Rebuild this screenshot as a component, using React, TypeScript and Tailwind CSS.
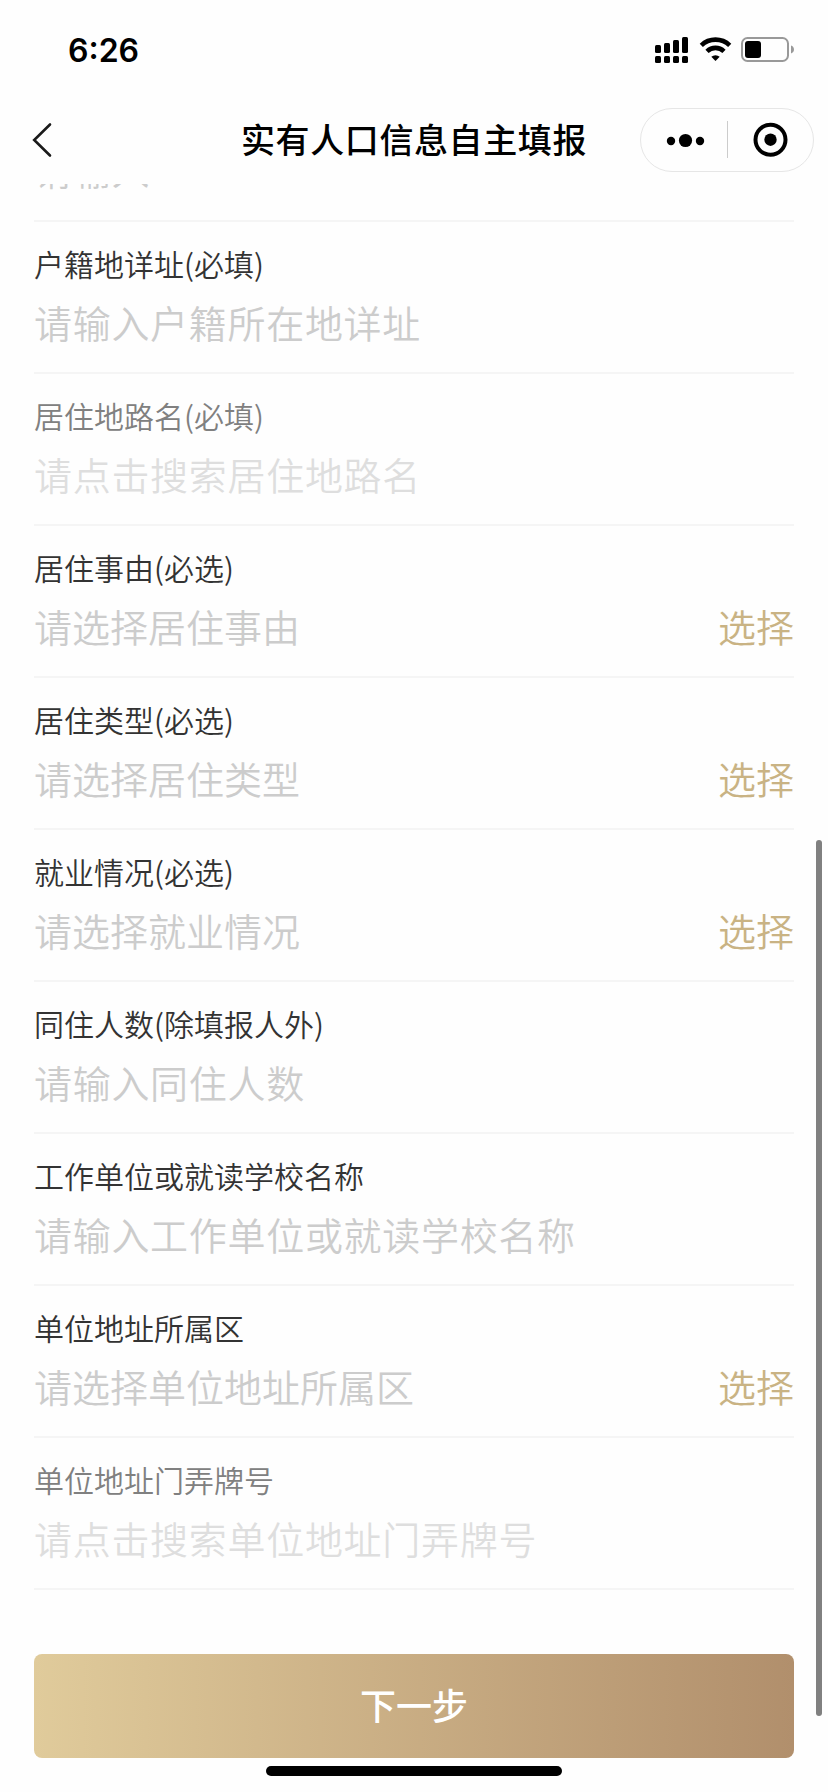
type Field = {
  label: string;
  placeholder: string;
  kind: "input" | "select" | "disabled";
};

const fields: Field[] = [
  { label: "户籍地详址(必填)", placeholder: "请输入户籍所在地详址", kind: "input" },
  { label: "居住地路名(必填)", placeholder: "请点击搜索居住地路名", kind: "disabled" },
  { label: "居住事由(必选)", placeholder: "请选择居住事由", kind: "select" },
  { label: "居住类型(必选)", placeholder: "请选择居住类型", kind: "select" },
  { label: "就业情况(必选)", placeholder: "请选择就业情况", kind: "select" },
  { label: "同住人数(除填报人外)", placeholder: "请输入同住人数", kind: "input" },
  { label: "工作单位或就读学校名称", placeholder: "请输入工作单位或就读学校名称", kind: "input" },
  { label: "单位地址所属区", placeholder: "请选择单位地址所属区", kind: "select" },
  { label: "单位地址门弄牌号", placeholder: "请点击搜索单位地址门弄牌号", kind: "disabled" },
];

function StatusIcons() {
  return (
    <svg className="h-[28px] w-[140px]" viewBox="655 36 140 28">
      <rect x="655" y="45" width="6" height="8" rx="1.5" />
      <rect x="664" y="43" width="6" height="10" rx="1.5" />
      <rect x="673" y="40" width="6" height="13" rx="1.5" />
      <rect x="682" y="37" width="6" height="16" rx="1.5" />
      <rect x="655" y="56" width="6" height="7" rx="1.5" />
      <rect x="664" y="56" width="6" height="7" rx="1.5" />
      <rect x="673" y="56" width="6" height="7" rx="1.5" />
      <rect x="682" y="56" width="6" height="7" rx="1.5" />
      <path d="M701.3 45.3a20.5 20.5 0 0 1 28.4 0" fill="none" stroke="black" strokeWidth="4.6" />
      <path d="M707 51.3a12.3 12.3 0 0 1 17 0" fill="none" stroke="black" strokeWidth="4.6" />
      <path d="M711.3 56.7a6.4 6.4 0 0 1 8.4 0L715.5 61z" />
      <rect x="742" y="38" width="46" height="23" rx="5.5" fill="none" stroke="#999" strokeWidth="2" />
      <rect x="745" y="41" width="16" height="17" rx="3" />
      <path d="M791 45.5c1.8.6 3 2.2 3 4s-1.2 3.4-3 4z" fill="#999" />
    </svg>
  );
}

function Capsule() {
  return (
    <div className="flex h-16 w-[174px] items-center rounded-full border border-[#e6e6e6]">
      <svg className="h-[62px] w-[172px]" viewBox="641 109 172 62">
        <circle cx="671" cy="141" r="4.2" />
        <circle cx="685.5" cy="140.5" r="6.6" />
        <circle cx="700" cy="141" r="4.2" />
        <rect x="727" y="121" width="1" height="37" fill="#ccc" />
        <circle cx="770.5" cy="139.7" r="15" fill="none" stroke="black" strokeWidth="4" />
        <circle cx="770.5" cy="139.7" r="6.2" />
      </svg>
    </div>
  );
}

function FieldRow({ label, placeholder, kind }: Field) {
  return (
    <div className="h-[152px] border-b-2 border-[#f5f5f5] pt-[19px]">
      <div className={`h-11 text-[30px] leading-[44px] ${kind === "disabled" ? "text-[#808080]" : "text-[#333]"}`}>
        {label}
      </div>
      <div className="mt-[13px] flex h-12 items-center justify-between text-[38px] leading-[48px]">
        <span
          className={
            kind === "select"
              ? "text-[#ccc]"
              : kind === "input"
                ? "tracking-[0.7px] text-[#ccc]"
                : "tracking-[0.7px] text-[#dedede]"
          }
        >
          {placeholder}
        </span>
        {kind === "select" && <button className="text-[#c9b384]">选择</button>}
      </div>
    </div>
  );
}

export default function App() {
  return (
    <div className="relative flex h-[1792px] w-[828px] flex-col overflow-hidden bg-[#fefefe] font-['Noto_Sans_CJK_SC',sans-serif] font-[350] text-black">
      <header className="h-[184px] shrink-0">
        <div className="flex h-[96px] items-center justify-between pr-[33px] pl-[68px] pt-[4px]">
          <span className="pt-[2px] font-[Inter,sans-serif] text-[32px] leading-[40px] font-semibold">6:26</span>
          <StatusIcons />
        </div>
        <div className="grid h-[88px] grid-cols-[1fr_auto_1fr] items-center px-[14px]">
          <svg className="ml-[17px] h-[36px] w-[22px]" viewBox="31 122 22 36">
            <path d="M50 124.5L34.2 140L50 155.5" fill="none" stroke="#1a1a1a" strokeWidth="2.6" strokeLinecap="round" />
          </svg>
          <h1 className="pb-[2px] text-[34px] leading-[48px] font-medium tracking-[0.6px]">实有人口信息自主填报</h1>
          <div className="flex justify-end">
            <Capsule />
          </div>
        </div>
      </header>
      <main className="h-[1470px] shrink-0 overflow-hidden px-[34px]">
        <div className="-mt-[39px] h-[77px] border-b-2 border-[#f5f5f5] text-[38px] leading-[48px] tracking-[0.7px] text-[#ccc]">
          请输入
        </div>
        {fields.map((field) => (
          <FieldRow key={field.label} {...field} />
        ))}
      </main>
      <footer className="flex flex-col items-center px-[34px]">
        <button className="h-[104px] w-full rounded-lg bg-linear-to-r from-[#e0cb9b] to-[#b18f6c] pb-[4px] text-[36px] font-medium text-white">
          下一步
        </button>
        <div className="mt-2 h-[10px] w-[296px] rounded-full bg-black" />
      </footer>
      <div className="absolute top-[840px] left-[816px] h-[876px] w-[6px] rounded-full bg-[#808080]" />
    </div>
  );
}
